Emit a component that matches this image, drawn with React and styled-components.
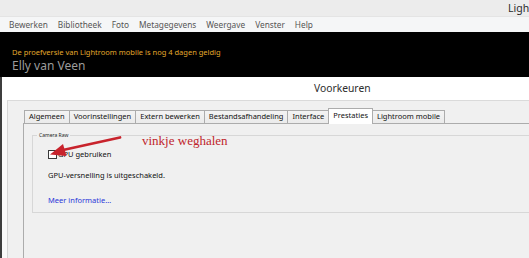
import React from 'react';
import styled, { createGlobalStyle } from 'styled-components';

const Global = createGlobalStyle`
  html, body { margin: 0; padding: 0; }
  body {
    width: 529px;
    height: 258px;
    overflow: hidden;
    background: #f0f0f0;
    font-family: "Noto Sans", "Open Sans", sans-serif;
  }
  #root { width: 529px; height: 258px; }
`;

const Page = styled.div`
  position: relative;
  width: 529px;
  height: 258px;
  display: flex;
  flex-direction: column;
  overflow: hidden;
`;

const TitleBar = styled.div`
  height: 16px;
  flex: none;
  background: #ececec;
  display: flex;
  align-items: center;
  padding-left: 508px;
  white-space: nowrap;
  overflow: hidden;
`;

const AppTitle = styled.span`
  font-size: 10.5px;
  line-height: 16px;
  color: #2b2b2b;
`;

const MenuBar = styled.div`
  height: 16px;
  flex: none;
  box-sizing: border-box;
  background: #f5f6f7;
  border-top: 1px solid #e4e4e4;
  display: flex;
  align-items: center;
  padding-left: 4px;
`;

const MenuItem = styled.span`
  font-size: 8.3px;
  line-height: 14px;
  color: #555;
  padding: 0 5px;
  white-space: nowrap;
`;

const Header = styled.div`
  height: 45px;
  flex: none;
  box-sizing: border-box;
  background: #000;
  padding: 16px 0 0 12px;
  display: flex;
  flex-direction: column;
  gap: 2px;
`;

const TrialNote = styled.span`
  font-size: 7.5px;
  line-height: 9px;
  color: #e2a92c;
  white-space: nowrap;
`;

const UserName = styled.span`
  font-size: 12px;
  line-height: 14px;
  color: #9c9c9c;
  white-space: nowrap;
`;

const Workspace = styled.div`
  flex: 1;
  display: flex;
  min-height: 0;
`;

const LeftStrip = styled.div`
  width: 2px;
  flex: none;
  background: #3e3e3e;
`;

const Dialog = styled.div`
  flex: 1;
  display: flex;
  flex-direction: column;
  background: #fafafa;
`;

const DialogTitle = styled.div`
  height: 23px;
  flex: none;
  background: #fff;
  padding-left: 312px;
  font-size: 10.3px;
  line-height: 23px;
  color: #2d2d2d;
  white-space: nowrap;
`;

const DialogBody = styled.div`
  flex: 1;
  display: flex;
  padding-left: 5px;
`;

const Client = styled.div`
  flex: 1;
  background: #f0f0f0;
  border-left: 1px solid #d6d6d6;
  border-top: 1px solid #dadada;
  padding: 7px 0 0 15px;
  display: flex;
  flex-direction: column;
`;

const TabRow = styled.div`
  display: flex;
  align-items: flex-end;
  height: 15px;
  margin-left: 1px;
  position: relative;
  z-index: 1;
`;

const Tab = styled.div`
  box-sizing: border-box;
  height: ${p => (p.$active ? '16px' : '13px')};
  margin-bottom: ${p => (p.$active ? '-1px' : '0')};
  border: 1px solid #acacac;
  border-bottom: ${p => (p.$active ? 'none' : '0')};
  margin-right: -1px;
  padding: ${p => (p.$active ? '1px 4px 0' : '0 4px')};
  background: ${p => (p.$active ? '#ffffff' : 'linear-gradient(#f3f3f3, #ebebeb)')};
  position: relative;
  z-index: ${p => (p.$active ? 2 : 1)};
  font-size: 7.5px;
  line-height: 11px;
  color: #111;
  white-space: nowrap;
`;

const Panel = styled.div`
  flex: 1;
  border-top: 1px solid #acacac;
  border-left: 1px solid #acacac;
  background: #f0f0f0;
  padding: 6px 0 0 8px;
`;

const GroupBox = styled.fieldset`
  margin: 0;
  min-width: 0;
  padding: 0 0 6px 15px;
  border: 1px solid #d7d7d7;
  border-right: none;
  display: flex;
  flex-direction: column;
  align-items: flex-start;
`;

const GroupLegend = styled.legend`
  margin-left: -11px;
  padding: 0 2px;
  font-size: 5px;
  line-height: 10px;
  color: #222;
`;

const CheckRow = styled.label`
  margin-top: 8px;
  display: flex;
  align-items: center;
  height: 12px;
  font-size: 7.5px;
  color: #111;
`;

const CheckBox = styled.span`
  box-sizing: border-box;
  width: 9px;
  height: 9px;
  border: 1px solid #3a3a3a;
  background: #fff;
  margin-right: 1px;
`;

const InfoText = styled.div`
  margin-top: ${p => p.$gap}px;
  font-size: 7.5px;
  line-height: 12px;
  color: ${p => (p.$link ? '#2b36d9' : '#111')};
  white-space: nowrap;
`;

const Note = styled.span`
  position: absolute;
  left: 142px;
  top: 133px;
  font-family: "Liberation Serif", "Times New Roman", serif;
  font-size: 13px;
  line-height: 16px;
  color: #bf252c;
  white-space: nowrap;
`;

const ArrowLayer = styled.svg`
  position: absolute;
  left: 0;
  top: 0;
  pointer-events: none;
`;

const menu = ['Bewerken', 'Bibliotheek', 'Foto', 'Metagegevens', 'Weergave', 'Venster', 'Help'];
const tabs = ['Algemeen', 'Voorinstellingen', 'Extern bewerken', 'Bestandsafhandeling', 'Interface', 'Prestaties', 'Lightroom mobile'];

export default function App() {
  return (
    <Page>
      <Global />
      <TitleBar>
        <AppTitle>Ligh</AppTitle>
      </TitleBar>
      <MenuBar>
        {menu.map(m => (
          <MenuItem key={m}>{m}</MenuItem>
        ))}
      </MenuBar>
      <Header>
        <TrialNote>De proefversie van Lightroom mobile is nog 4 dagen geldig</TrialNote>
        <UserName>Elly van Veen</UserName>
      </Header>
      <Workspace>
        <LeftStrip />
        <Dialog>
          <DialogTitle>Voorkeuren</DialogTitle>
          <DialogBody>
            <Client>
              <TabRow>
                {tabs.map(t => (
                  <Tab key={t} $active={t === 'Prestaties'}>{t}</Tab>
                ))}
              </TabRow>
              <Panel>
                <GroupBox>
                  <GroupLegend>Camera Raw</GroupLegend>
                  <CheckRow>
                    <CheckBox />
                    GPU gebruiken
                  </CheckRow>
                  <InfoText $gap={9}>GPU-versnelling is uitgeschakeld.</InfoText>
                  <InfoText $gap={13} $link>Meer informatie…</InfoText>
                </GroupBox>
              </Panel>
            </Client>
          </DialogBody>
        </Dialog>
      </Workspace>
      <Note>vinkje weghalen</Note>
      <ArrowLayer width="529" height="258" viewBox="0 0 529 258">
        <line x1="120" y1="137.5" x2="63" y2="150" stroke="#c8232c" strokeWidth="2.8" strokeLinecap="round" />
        <polygon points="50,154.5 63,144 66.5,156" fill="#c8232c" />
      </ArrowLayer>
    </Page>
  );
}
